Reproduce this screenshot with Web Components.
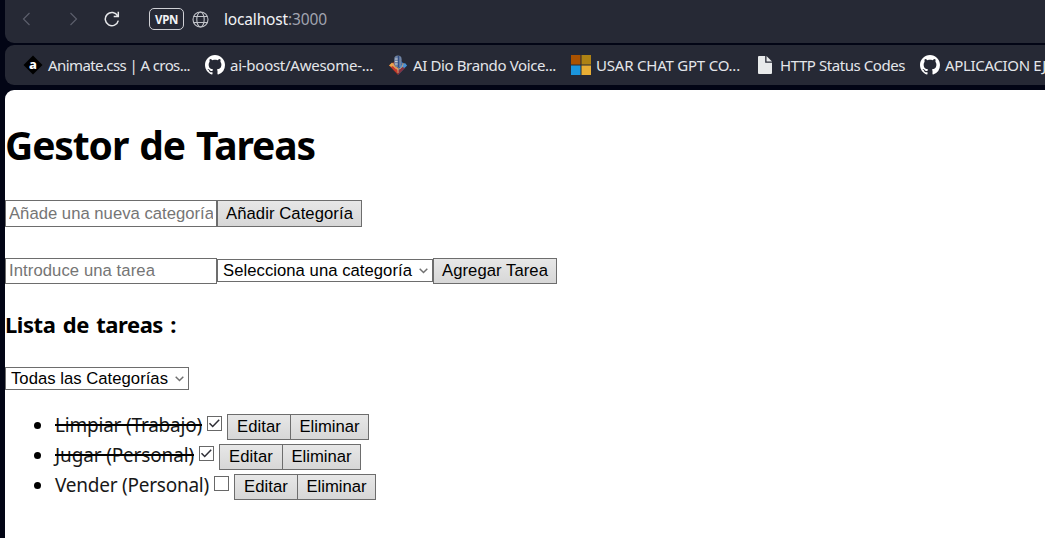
<!DOCTYPE html>
<html lang="es">
<head>
<meta charset="utf-8">
<title>Gestor de Tareas</title>
<style>
html, body { margin: 0; height: 100%; overflow: hidden; background: #020515; }
body { font-family: "Noto Sans", "Open Sans", sans-serif; }
</style>
</head>
<body>
<browser-window></browser-window>
<script>
const define = (name, html, setup) => customElements.define(name, class extends HTMLElement {
  connectedCallback() {
    if (this.shadowRoot) return;
    const t = document.createElement('template');
    t.innerHTML = html;
    this.attachShadow({ mode: 'open' }).append(t.content.cloneNode(true));
    if (setup) setup.call(this, this.shadowRoot);
  }
});

/* A line of text whose letter spacing is adjusted to fill the width given in w. */
define('fit-text', `<style>
:host { display: block; flex: none; }
span { display: inline-block; vertical-align: top; white-space: pre; }
:host([done]) span { text-decoration: line-through 2px #000; }
</style><span><slot></slot></span>`, function (root) {
  const w = +this.getAttribute('w');
  const s = root.querySelector('span');
  const n = this.textContent.length;
  s.style.letterSpacing = ((w - s.getBoundingClientRect().width) / n) + 'px';
  this.style.width = w + 'px';
});

const icons = {
  back: '<svg width="9" height="14" viewBox="0 0 9 14" fill="none" stroke="#5b5e6b" stroke-width="1.2"><path d="M7.5 1 1.5 7l6 6"/></svg>',
  forward: '<svg width="9" height="14" viewBox="0 0 9 14" fill="none" stroke="#5b5e6b" stroke-width="1.2"><path d="m1.500 1 6 6-6 6"/></svg>',
  reload: '<svg width="16" height="16" viewBox="0 0 16 16" fill="none" stroke="#e6e7ea" stroke-width="1.5"><path d="M13.700 5A6.600 6.600 0 1 0 14.300 9.600M14.300 .8v4.600H9.700"/></svg>',
  globe: '<svg width="17" height="17" viewBox="0 0 17 17" fill="none" stroke="#c0c2c8" stroke-width="1.100"><circle cx="8.500" cy="8.500" r="7.500"/><ellipse cx="8.500" cy="8.500" rx="3.700" ry="7.500"/><path d="M1.800 5.500h13.400M1.800 11.500h13.400"/></svg>',
  animate: '<svg width="20" height="20" viewBox="0 0 20 20"><path d="m10 .5 9.500 9.500-9.500 9.500L.5 10z" fill="#000"/><text x="10" y="14" text-anchor="middle" font-family="Noto Sans" font-weight="800" font-size="13" fill="#fff">a</text></svg>',
  github: '<svg width="20" height="20" viewBox="0 0 16 16" fill="#fff"><path d="M8 0C3.580 0 0 3.580 0 8c0 3.540 2.290 6.530 5.470 7.590.4.07.55-.17.55-.38 0-.19-.01-.82-.01-1.490-2.010.37-2.530-.49-2.690-.94-.09-.23-.48-.94-.82-1.130-.28-.15-.68-.52-.01-.53.63-.01 1.080.58 1.230.82.72 1.210 1.870.87 2.330.66.07-.52.28-.87.51-1.070-1.780-.2-3.640-.89-3.640-3.950 0-.87.31-1.590.82-2.150-.08-.2-.36-1.020.08-2.120 0 0 .67-.21 2.200.82.64-.18 1.320-.27 2-.27s1.360.09 2 .27c1.530-1.040 2.200-.82 2.200-.82.44 1.100.16 1.920.08 2.120.51.56.82 1.270.82 2.150 0 3.070-1.870 3.750-3.650 3.950.29.25.54.73.54 1.480 0 1.070-.01 1.930-.01 2.200 0 .21.15.46.55.38A8.010 8.010 0 0 0 16 8c0-4.420-3.580-8-8-8z"/></svg>',
  voice: '<svg width="20" height="20" viewBox="0 0 20 20"><path d="M10 4 1 10.500 10 20z" fill="#9c3528"/><path d="m1 10.500 3-3 6 6V16z" fill="#eda548"/><path d="m10 4 9 6.500L10 20z" fill="#235da5"/><path d="m12 11 5-3 2 2.500-7 7z" fill="#4791d4"/><path d="m3 12 6 6 1-3-5-4z" fill="#c9392c"/><path d="m10 20 7-7-3-1-4 4z" fill="#853140"/><rect x="6.200" y=".5" width="7.400" height="12" rx="3.700" fill="#6e83a4"/><path d="M7 4h3M7 6.500h3M7 9h3" stroke="#c3c8d0"/><path d="M10.500 1v11" stroke="#304d85" stroke-width="1.500"/><path d="M5 8c0 8 10 8 10 0M10 14v4" fill="none" stroke="#d9a36c"/></svg>',
  tiles: '<svg width="20" height="20" viewBox="0 0 20 20"><path fill="#aa5200" d="M0 0h9.500v9.500H0z"/><path fill="#ae8214" d="M10.500 0H20v9.500h-9.500z"/><path fill="#1b95dc" d="M0 10.500h9.500V20H0z"/><path fill="#e8ae35" d="M10.500 10.500H20V20h-9.500z"/></svg>',
  page: '<svg width="14" height="18" viewBox="0 0 14 18" fill="#e8eaeb"><path d="M0 1q0-1 1-1h6.200v6.800H14V17q0 1-1 1H1q-1 0-1-1z"/><path d="M8.500 0 14 5.500H8.500z"/></svg>'
};
define('ui-icon', '<style>:host{display:grid;place-items:center;flex:none}svg{display:block}</style>', function (root) {
  root.innerHTML += icons[this.getAttribute('name')];
});

define('nav-bar', `
<style>
:host { display: flex; height: 43px; box-sizing: border-box; padding: 0 0 5px 15px; align-items: center; background: #262935; border-bottom-left-radius: 9px; font-size: 15.500px; color: #f2f3f5; }
.b { width: 12px; } .f { margin-left: 35px; width: 12px; } .r { margin: 0 0 0 24px; width: 18px; }
.vpn { margin-left: 28px; width: 35px; height: 22px; box-sizing: border-box; border: 1.500px solid #cfd0d5; border-radius: 5px; display: flex; justify-content: center; align-items: center; font-size: 11.500px; font-weight: 700; }
.g { margin: 1px 15px 0 8px; width: 17px; }
.port { color: #a1a4b0; }
</style>
<ui-icon class="b" name="back"></ui-icon><ui-icon class="f" name="forward"></ui-icon><ui-icon class="r" name="reload"></ui-icon>
<div class="vpn"><fit-text w="23">VPN</fit-text></div>
<ui-icon class="g" name="globe"></ui-icon>
<fit-text w="64">localhost</fit-text><fit-text class="port" w="39">:3000</fit-text>`);

define('book-mark', `
<style>
:host { display: flex; flex: none; align-items: center; }
ui-icon { width: 20px; height: 20px; }
slot { display: block; margin-left: 5px; }
</style><ui-icon></ui-icon><slot></slot>`, function (root) {
  const i = document.createElement('ui-icon');
  i.setAttribute('name', this.getAttribute('icon'));
  root.querySelector('ui-icon').replaceWith(i);
});

define('bookmarks-bar', `
<style>
:host { display: flex; height: 40px; margin-top: 2px; padding-left: 18px; align-items: center; overflow: hidden; background: #262935; border-radius: 9px 0 0 9px; font-size: 15px; color: #e4e6ea; }
book-mark { margin-right: 15px; }
</style>
<book-mark icon="animate"><fit-text w="142">Animate.css | A cros...</fit-text></book-mark>
<book-mark icon="github"><fit-text w="143">ai-boost/Awesome-...</fit-text></book-mark>
<book-mark icon="voice"><fit-text w="143">AI Dio Brando Voice...</fit-text></book-mark>
<book-mark icon="tiles"><fit-text w="144">USAR CHAT GPT CO...</fit-text></book-mark>
<book-mark icon="page"><fit-text w="125">HTTP Status Codes</fit-text></book-mark>
<book-mark icon="github"><fit-text w="101">APLICACION EJ</fit-text></book-mark>`);

define('text-field', `
<style>
:host { display: flex; flex: none; width: 212px; height: 26px; box-sizing: border-box; border: 1px solid #6d6d6d; padding: 0 3px; align-items: center; background: #fff; color: #757575; }
div { overflow: hidden; width: 100%; }
</style><div><slot></slot></div>`);

define('push-button', `
<style>
:host { display: flex; flex: none; height: 26px; box-sizing: border-box; border: 1px solid #6d6d6d; justify-content: center; align-items: center; background: linear-gradient(#e7e7e7, #d7d7d7); color: #000; font: 16.670px "Liberation Sans", Arial, sans-serif; }
</style><slot></slot>`);

define('select-box', `
<style>
:host { display: flex; flex: none; height: 23px; box-sizing: border-box; border: 1px solid #6d6d6d; padding: 0 4px 0 5px; justify-content: space-between; align-items: center; background: #fff; color: #000; font: 16.670px "Liberation Sans", Arial, sans-serif; }
svg { display: block; }
</style><slot></slot><svg width="9" height="6" viewBox="0 0 9 6" fill="none" stroke="#707070" stroke-width="1.500"><path d="M.7.8 4.500 4.500 8.300.8"/></svg>`);

define('check-box', `
<style>
:host { display: block; flex: none; width: 15px; height: 15px; box-sizing: border-box; border: 1.500px solid #686868; background: #fff; }
svg { display: none; } :host([checked]) svg { display: block; }
</style><svg width="13" height="13" viewBox="0 0 13 13" fill="none" stroke="#2e2e36" stroke-width="1.500"><path d="m1.500 6.300 3.200 3.200 6.500-6.700"/></svg>`);

define('task-item', `
<style>
:host { display: flex; height: 30px; align-items: flex-start; font-size: 19px; line-height: 26px; color: #181818; }
i { width: 7px; height: 7px; border-radius: 50%; background: #000; margin: 10px 14px 0 29px; flex: none; }
check-box { margin: 4px 5px 0; }
push-button { margin-top: 2px; }
.e { width: 64px; } .x { width: 79px; margin-left: -1px; }
</style><i></i><slot></slot><check-box></check-box>
<push-button class="e"><fit-text w="44">Editar</fit-text></push-button><push-button class="x"><fit-text w="60">Eliminar</fit-text></push-button>`, function (root) {
  if (this.hasAttribute('done')) root.querySelector('check-box').setAttribute('checked', '');
});

define('task-manager', `
<style>
:host { display: flex; flex-direction: column; flex: 1; margin-top: 5px; background: #fff; border-top-left-radius: 9px; color: #000; }
h1, h3 { margin: 0; font-weight: 700; }
h1 { height: 54px; line-height: 54px; margin-top: 28px; font-size: 39px; word-spacing: 2px; }
.row { display: flex; align-items: flex-start; font: 16.670px "Liberation Sans", Arial, sans-serif; }
.one { margin-top: 28px; } .one > * { height: 27px; }
.two { margin-top: 31px; } .two select-box { margin-top: 1px; }
h3 { font-size: 22px; height: 32px; line-height: 32px; margin-top: 24px; word-spacing: 2px; }
.three { margin-top: 27px; }
.list { margin-top: 22px; }
</style>
<h1><fit-text w="310">Gestor de Tareas</fit-text></h1>
<div class="row one"><text-field><fit-text w="205">Añade una nueva categoría</fit-text></text-field><push-button style="width:145px"><fit-text w="127">Añadir Categoría</fit-text></push-button></div>
<div class="row two"><text-field><fit-text w="146">Introduce una tarea</fit-text></text-field><select-box style="width:216px"><fit-text w="189">Selecciona una categoría</fit-text></select-box><push-button style="width:124px"><fit-text w="106">Agregar Tarea</fit-text></push-button></div>
<h3><fit-text w="171">Lista de tareas :</fit-text></h3>
<div class="row three"><select-box style="width:184px"><fit-text w="157">Todas las Categorías</fit-text></select-box></div>
<div class="list">
<task-item done><fit-text done w="147">Limpiar (Trabajo)</fit-text></task-item>
<task-item done><fit-text done w="139">Jugar (Personal)</fit-text></task-item>
<task-item><fit-text w="154">Vender (Personal)</fit-text></task-item>
</div>`);

define('browser-window', `
<style>:host { display: flex; flex-direction: column; height: 538px; box-sizing: border-box; padding-left: 5px; overflow: hidden; }</style>
<nav-bar></nav-bar><bookmarks-bar></bookmarks-bar><task-manager></task-manager>`);
</script>
</body>
</html>
